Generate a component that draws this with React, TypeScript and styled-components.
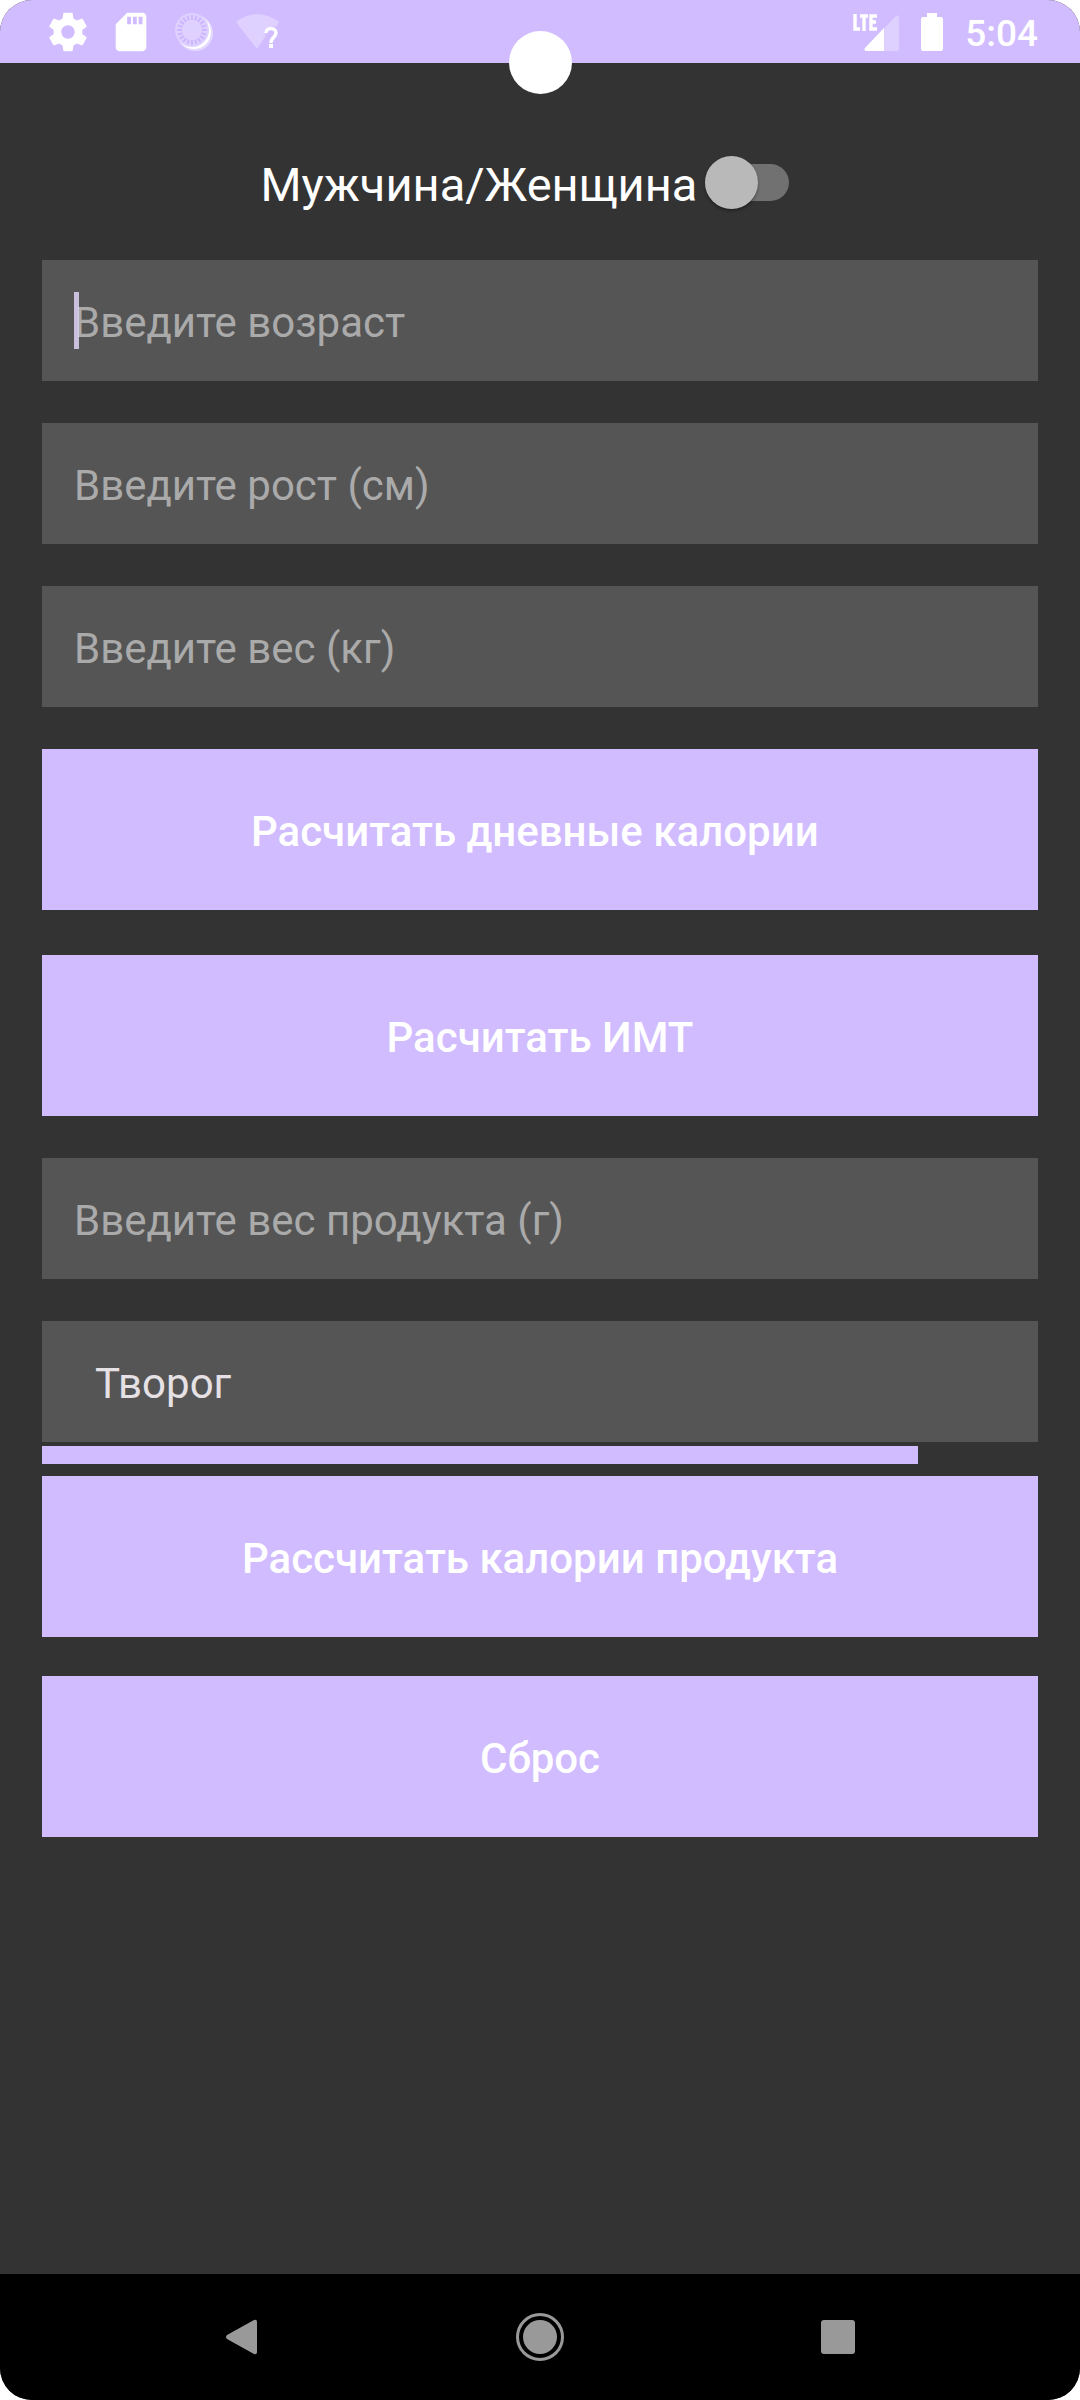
import React, { useState } from 'react';
import styled, { createGlobalStyle } from 'styled-components';

const color = {
  accent: '#d0bcff',
  page: '#333333',
  field: '#555555',
  hint: '#aaaaaa',
  caret: '#d6caeb',
};

const GlobalStyle = createGlobalStyle`
  *, *::before, *::after { box-sizing: border-box; }
  html { background: #ffffff; }
  body { margin: 0; font-family: Roboto, "Liberation Sans", sans-serif; }
`;

const Device = styled.div`
  position: relative;
  display: flex;
  flex-direction: column;
  min-height: 100vh;
  background: ${color.page};
  border-radius: 32px;
  overflow: hidden;
`;

const StatusBar = styled.header`
  display: flex;
  justify-content: space-between;
  align-items: center;
  height: 63px;
  padding: 0 42px 0 45px;
  background: ${color.accent};
  color: #ffffff;
`;

const StatusGroup = styled.div<{ $gap: number }>`
  display: flex;
  align-items: center;
  gap: ${(p) => p.$gap}px;

  svg { display: block; }
`;

const Clock = styled.time`
  padding-top: 4px;
  font-size: 37px;
  font-weight: 500;
  line-height: 44px;
`;

const Camera = styled.div`
  position: absolute;
  top: 31px;
  left: 50%;
  width: 63px;
  height: 63px;
  margin-left: -31px;
  border-radius: 50%;
  background: #ffffff;
`;

const Form = styled.form`
  flex: 1;
  display: flex;
  flex-direction: column;
  padding: 86px 42px 42px;
`;

const GenderRow = styled.label`
  display: flex;
  align-items: center;
  justify-content: center;
  gap: 8px;
  height: 71px;
  margin-bottom: 40px;
  padding-right: 30px;
  color: #ffffff;
  font-size: 47px;
  line-height: 56px;
`;

const Switch = styled.input`
  appearance: none;
  display: flex;
  align-items: center;
  width: 84px;
  height: 37px;
  margin: 0 0 4px;
  background: #717171;
  border-radius: 19px;

  &::before {
    content: '';
    flex: none;
    width: 53px;
    height: 53px;
    border-radius: 50%;
    background: #b9b9b9;
    box-shadow: 0 2px 3px rgba(0, 0, 0, 0.35);
  }

  &:checked { justify-content: flex-end; }
`;

const FieldBox = styled.div`
  position: relative;
  margin-bottom: 42px;
`;

const Input = styled.input`
  display: block;
  width: 100%;
  height: 121px;
  padding: 3px 32px 0;
  border: 0;
  border-radius: 0;
  outline: 0;
  background: ${color.field};
  color: #ffffff;
  caret-color: ${color.caret};
  font: 400 42px/56px Roboto, "Liberation Sans", sans-serif;

  &::placeholder { color: ${color.hint}; opacity: 1; }
`;

const Caret = styled.span`
  position: absolute;
  top: 32px;
  left: 32px;
  width: 5px;
  height: 57px;
  background: ${color.caret};
  opacity: 0.9;
`;

const Select = styled.select`
  appearance: none;
  display: block;
  width: 100%;
  height: 121px;
  padding: 5px 53px 0;
  border: 0;
  border-radius: 0;
  background: ${color.field};
  color: #e6e1e5;
  font: 400 42px/56px Roboto, "Liberation Sans", sans-serif;
`;

const Accent = styled.div`
  width: 88%;
  height: 18px;
  margin: 4px 0 12px;
  background: ${color.accent};
`;

const Button = styled.button<{ $gap: number }>`
  height: 161px;
  margin: 0 0 ${(p) => p.$gap}px;
  padding: 5px 32px 0;
  border: 0;
  background: ${color.accent};
  color: #ffffff;
  font: 500 42px/56px Roboto, "Liberation Sans", sans-serif;
`;

const NavBar = styled.nav`
  display: flex;
  justify-content: center;
  gap: 236px;
  height: 126px;
  background: #000000;
`;

const NavButton = styled.button`
  display: flex;
  align-items: center;
  justify-content: center;
  width: 62px;
  padding: 0;
  border: 0;
  background: transparent;
  color: #999999;
`;

const ticks = Array.from({ length: 20 }, (_, i) => i * 18);

const GearIcon = () => (
  <svg width="46" height="46" viewBox="0 0 24 24" fill="currentColor">
    <path d="M19.43 12.98c.04-.32.07-.64.07-.98s-.03-.66-.07-.98l2.11-1.65c.19-.15.24-.42.12-.64l-2-3.46c-.12-.22-.39-.3-.61-.22l-2.49 1c-.52-.4-1.08-.73-1.69-.98l-.38-2.65C14.46 2.18 14.25 2 14 2h-4c-.25 0-.46.18-.49.42l-.38 2.65c-.61.25-1.17.59-1.69.98l-2.49-1c-.23-.09-.49 0-.61.22l-2 3.46c-.13.22-.07.49.12.64l2.11 1.65c-.04.32-.07.65-.07.98s.03.66.07.98l-2.11 1.65c-.19.15-.24.42-.12.64l2 3.46c.12.22.39.3.61.22l2.49-1c.52.4 1.08.73 1.69.98l.38 2.65c.03.24.24.42.49.42h4c.25 0 .46-.18.49-.42l.38-2.65c.61-.25 1.17-.59 1.69-.98l2.49 1c.23.09.49 0 .61-.22l2-3.46c.12-.22.07-.49-.12-.64l-2.11-1.65zM12 15.5c-1.93 0-3.5-1.57-3.5-3.5s1.57-3.5 3.5-3.5 3.5 1.57 3.5 3.5-1.57 3.5-3.5 3.5z" />
  </svg>
);

const CardIcon = () => (
  <svg width="46" height="46" viewBox="0 0 24 24" fill="currentColor">
    <path d="M18 2h-8L4.02 8 4 20c0 1.1.9 2 2 2h12c1.1 0 2-.9 2-2V4c0-1.1-.9-2-2-2zm-6 6h-2V4h2v4zm3 0h-2V4h2v4zm3 0h-2V4h2v4z" />
  </svg>
);

const SyncIcon = () => (
  <svg width="46" height="46" viewBox="0 0 46 46">
    <circle cx="24" cy="24" r="18" fill="#e4d9ff" />
    <circle cx="23" cy="23" r="17" fill="#ffffff" />
    <circle cx="21" cy="21" r="17" fill="#dfd1ff" />
    <g stroke="#cbb5ff" strokeWidth="2">
      {ticks.map((a) => (
        <line key={a} x1="21" y1="6" x2="21" y2="11" transform={`rotate(${a} 21 21)`} />
      ))}
    </g>
  </svg>
);

const WifiUnknownIcon = () => (
  <svg width="46" height="46" viewBox="0 0 46 46" fill="none">
    <path d="M2 13Q23-3 45 13L42 18Q31 15 31 28L23 40Z" fill="#ffffff" opacity="0.3" />
    <path d="M32 24C32 18 42 18 42 24C42 28 37 28 37 34" stroke="#ffffff" strokeWidth="3.5" />
    <rect x="35" y="35" width="4" height="4" fill="#ffffff" />
  </svg>
);

const BatteryIcon = () => (
  <svg width="22" height="38" viewBox="0 0 22 38" fill="currentColor">
    <path d="M6 0h10v4h4a2 2 0 0 1 2 2v30a2 2 0 0 1-2 2H2a2 2 0 0 1-2-2V6a2 2 0 0 1 2-2h4z" />
  </svg>
);

const SignalIcon = () => (
  <svg width="46" height="38" viewBox="0 0 46 38" fill="currentColor">
    <path d="M46 5v31a2 2 0 0 1-2 2H13a2 2 0 0 1-1-3L43 3q2-2 3 2z" opacity="0.3" />
    <path d="M31 15v23H13a2 2 0 0 1-1-3z" />
    <path d="M2 1v15h5M7 3h8M11 3v15M24 3h-6v13h6M18 9h5" fill="none" stroke="currentColor" strokeWidth="3.4" />
  </svg>
);

type FieldProps = { id: string; hint: string; active?: boolean };

function Field({ id, hint, active }: FieldProps) {
  const [value, setValue] = useState('');
  return (
    <FieldBox>
      <Input
        id={id}
        aria-label={hint}
        inputMode="numeric"
        placeholder={hint}
        value={value}
        onChange={(e) => setValue(e.target.value)}
      />
      {active && value === '' && <Caret />}
    </FieldBox>
  );
}

export default function App() {
  return (
    <>
      <GlobalStyle />
      <Device>
        <StatusBar>
          <StatusGroup $gap={17}>
            <GearIcon />
            <CardIcon />
            <SyncIcon />
            <WifiUnknownIcon />
          </StatusGroup>
          <StatusGroup $gap={22}>
            <SignalIcon />
            <BatteryIcon />
            <Clock>5:04</Clock>
          </StatusGroup>
        </StatusBar>
        <Camera />
        <Form onSubmit={(e) => e.preventDefault()}>
          <GenderRow>
            Мужчина/Женщина
            <Switch type="checkbox" role="switch" />
          </GenderRow>
          <Field id="age" hint="Введите возраст" active />
          <Field id="height" hint="Введите рост (см)" />
          <Field id="weight" hint="Введите вес (кг)" />
          <Button type="button" $gap={45}>{'Расчитать дневные калории\u00a0'}</Button>
          <Button type="button" $gap={42}>Расчитать ИМТ</Button>
          <Field id="portion" hint="Введите вес продукта (г)" />
          <Select aria-label="Продукт">
            <option>Творог</option>
          </Select>
          <Accent />
          <Button type="button" $gap={39}>Рассчитать калории продукта</Button>
          <Button type="reset" $gap={0}>Сброс</Button>
        </Form>
        <NavBar>
          <NavButton type="button" aria-label="Назад">
            <svg width="32" height="36" viewBox="0 0 32 36" fill="currentColor">
              <path d="M28 1q3-1 3 2v30q0 3-3 2L1 20q-2-2 0-4z" />
            </svg>
          </NavButton>
          <NavButton type="button" aria-label="Домой">
            <svg width="48" height="48" viewBox="0 0 48 48" fill="currentColor">
              <circle cx="24" cy="24" r="22.5" fill="none" stroke="currentColor" strokeWidth="3" />
              <circle cx="24" cy="24" r="17" />
            </svg>
          </NavButton>
          <NavButton type="button" aria-label="Недавние">
            <svg width="34" height="34" viewBox="0 0 34 34" fill="currentColor">
              <rect width="34" height="34" rx="3" />
            </svg>
          </NavButton>
        </NavBar>
      </Device>
    </>
  );
}
